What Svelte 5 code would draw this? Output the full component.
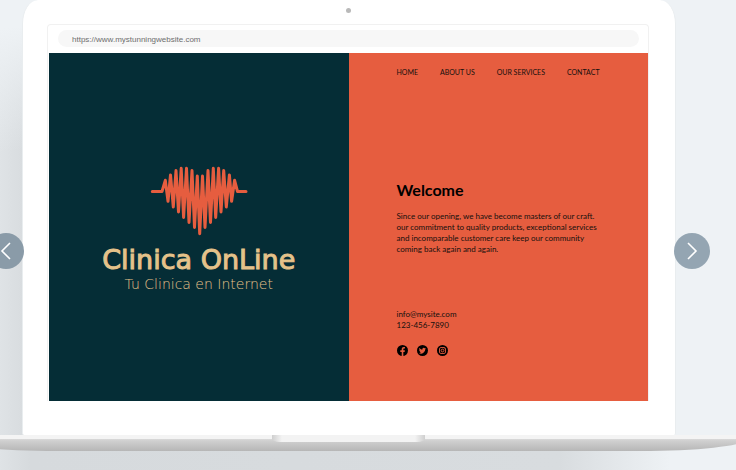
<script>
  const nav = ['Home', 'About us', 'Our services', 'Contact'];
</script>

<main class="stage">
  <div class="laptop">
    <div class="camera"></div>
    <section class="browser">
      <div class="bar">
        <input type="text" aria-label="Address" value="https://www.mystunningwebsite.com" readonly />
      </div>
      <div class="site">
        <div class="brand">
          <svg class="heart" viewBox="0 0 98 70" aria-hidden="true">
            <path d="M2.3 25.5H12L15.3 14.3L18 35.3L20.5 9L23.3 41L26 4.5L28.5 46L31.2 2.3L33.6 51.5L36.5 2.3L39 56.5L42 4.5L44.5 61.5L47.3 10L49.7 67.8L52.5 10L55 61.5L58 4.5L60.5 56.5L63.3 2.3L65.7 51.5L68.6 2.3L71 46L73.7 4.5L76.3 41L79.4 9L81.6 35.3L84.6 14.3L87.5 25.5H96" />
          </svg>
          <div class="name">Clinica OnLine</div>
          <div class="tagline">Tu Clinica en Internet</div>
        </div>
        <div class="content">
          <nav>
            {#each nav as item}
              <a href="#top">{item}</a>
            {/each}
          </nav>
          <h1>Welcome</h1>
          <p class="intro">Since our opening, we have become masters of our craft.<br />our commitment to quality products, exceptional services<br />and incomparable customer care keep our community<br />coming back again and again.</p>
          <address>
            <a href="mailto:info@mysite.com">info@mysite.com</a>
            <a href="tel:1234567890">123-456-7890</a>
          </address>
          <div class="social">
            <a href="#facebook" aria-label="Facebook">
              <svg viewBox="0 0 24 24"><circle cx="12" cy="12" r="12" /><path class="cut" d="M10.3 24v-9H7.2v-3.5h3.1V9c0-3.1 1.8-4.8 4.6-4.8 1.3 0 2.4.2 2.4.2v3h-1.5c-1.5 0-2 .9-2 1.9v2.2h3.4l-.6 3.5h-2.8v9z" /></svg>
            </a>
            <a href="#twitter" aria-label="Twitter">
              <svg viewBox="0 0 24 24"><circle cx="12" cy="12" r="12" /><path class="cut" d="M19.5 7.6c-.6.3-1.2.4-1.8.5.7-.4 1.1-1 1.4-1.7-.6.4-1.3.6-2 .8a3.2 3.2 0 0 0-5.5 2.9c-2.6-.1-5-1.4-6.5-3.400-.9 1.500-.4 3.300 1 4.300-.5 0-1-.2-1.400-.4 0 1.500 1.100 2.900 2.600 3.200-.5.1-1 .1-1.500 0 .4 1.300 1.600 2.200 3 2.200A6.400 6.400 0 0 1 4 17.400a9.100 9.100 0 0 0 14-8.100c.6-.5 1.100-1 1.500-1.700z" /></svg>
            </a>
            <a href="#instagram" aria-label="Instagram">
              <svg viewBox="0 0 24 24"><circle cx="12" cy="12" r="12" /><rect class="line" x="5.5" y="5.5" width="13" height="13" rx="3" /><circle class="line" cx="12" cy="12" r="3" /><circle class="cut" cx="15.8" cy="8.2" r="1" /></svg>
            </a>
          </div>
        </div>
      </div>
    </section>
  </div>
  <div class="base"><div class="notch"></div></div>
  <button class="arrow prev" aria-label="Previous">
    <svg viewBox="0 0 36 36"><path d="M22 10L14 18L22 26" /></svg>
  </button>
  <button class="arrow next" aria-label="Next">
    <svg viewBox="0 0 36 36"><path d="M14 10L22 18L14 26" /></svg>
  </button>
</main>

<style>
  :global(body) {
    margin: 0;
    background: #eef2f5;
  }
  * {
    box-sizing: border-box;
  }
  a {
    color: inherit;
    text-decoration: none;
  }
  .stage {
    position: relative;
    overflow: hidden;
    min-height: 100vh;
    font-family: Lato, sans-serif;
    color: #14100e;
    background:
      linear-gradient(172deg, #eef2f5 6%, #eef2f500 32%) left top / 60px 100% no-repeat,
      linear-gradient(90deg, #dfe3e6, #d6dadd 30px, #d8dcdf 76%, #eef2f5 91%);
  }
  .stage::before {
    content: '';
    position: absolute;
    inset: 0 0 31px auto;
    width: 80px;
    background: #eef2f5;
  }
  .laptop {
    position: relative;
    margin: 0 60px 0 22px;
    padding: 8px 26px 34px 24px;
    border: solid #e9edef;
    border-width: 0 1px;
    border-radius: 16px 16px 2px 2px / 24px 24px 2px 2px;
    background: #fff;
  }
  .camera {
    width: 5px;
    height: 5px;
    margin: 0 auto 11px;
    border-radius: 50%;
    background: #b9b9b9;
  }
  .browser {
    padding-left: 1px;
    border: 1px solid #f1f1f1;
    border-bottom: 0;
    border-radius: 4px 4px 0 0;
  }
  .bar {
    padding: 5px 9px 6px;
  }
  input {
    display: block;
    width: 100%;
    height: 17px;
    padding: 2px 14px 0;
    border: 0;
    border-radius: 9px;
    outline: 0;
    background: #f7f7f7;
    color: #6e6e6e;
    font: 8px/15px "Liberation Sans", sans-serif;
  }
  .site {
    display: grid;
    grid-template-columns: 1fr 1fr;
  }
  .brand {
    display: flex;
    flex-direction: column;
    align-items: center;
    justify-content: center;
    padding-top: 4px;
    background: #052d36;
    color: #e5c28a;
    font-family: "DejaVu Sans", sans-serif;
    white-space: nowrap;
  }
  .heart {
    width: 98px;
    height: 70px;
  }
  .heart path {
    fill: none;
    stroke: #e65d3f;
    stroke-width: 3;
    stroke-linecap: round;
    stroke-linejoin: round;
  }
  .name {
    margin-top: 8px;
    font-size: 27px;
    line-height: 32px;
    -webkit-text-stroke: 1px #e5c28a;
  }
  .tagline {
    font-size: 14px;
    font-weight: 200;
    line-height: 16px;
  }
  .content {
    padding: 14px 40px 45px 48px;
    background: #e65d3f;
  }
  nav {
    display: flex;
    gap: 22px;
    font-size: 7px;
    line-height: 10px;
    text-transform: uppercase;
    white-space: nowrap;
  }
  h1 {
    margin: 103px 0 11px;
    font-size: 16px;
    line-height: 20px;
    color: #000;
  }
  .intro {
    margin: 0;
    font-size: 8px;
    line-height: 11px;
    white-space: nowrap;
  }
  address {
    display: flex;
    flex-direction: column;
    align-items: flex-start;
    margin: 54px 0 14px;
    font-size: 8px;
    font-style: normal;
    line-height: 11px;
  }
  .social {
    display: flex;
    gap: 9px;
  }
  .social svg {
    display: block;
    width: 11px;
    height: 11px;
  }
  .cut {
    fill: #e65d3f;
  }
  .line {
    fill: none;
    stroke: #e65d3f;
    stroke-width: 2;
  }
  .base {
    position: relative;
    height: 16px;
    margin: 0 -8px 0 -47px;
    border-radius: 0 0 104px 104px / 0 0 11px 11px;
    background: linear-gradient(#f4f4f4 4px, #d9d9d9 4px, #cfcfcf 6px, #b6b6b6);
  }
  .notch {
    width: 153px;
    height: 7px;
    margin: 0 auto;
    border-radius: 0 0 8px 8px / 0 0 3px 3px;
    background: linear-gradient(90deg, #cfcfcf, #f3f3f3 10px calc(100% - 10px), #cfcfcf);
  }
  .arrow {
    position: absolute;
    top: 233px;
    width: 36px;
    height: 36px;
    padding: 0;
    border: 0;
    border-radius: 50%;
    background: #94a5b2;
  }
  .prev {
    left: -12px;
    background: #8a9ba8;
  }
  .next {
    right: 26px;
  }
  .arrow svg {
    display: block;
    fill: none;
    stroke: #fff;
    stroke-width: 1.6;
  }
</style>
